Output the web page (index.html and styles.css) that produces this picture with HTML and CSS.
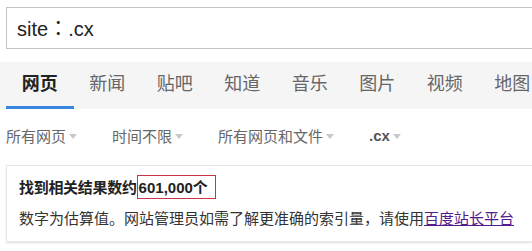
FILE: index.html
```html
<!DOCTYPE html>
<html lang="zh-CN">
<head>
<meta charset="utf-8">
<link rel="stylesheet" href="styles.css">
</head>
<body>
<div class="search">site<span class="colon" lang="zh-TW">：</span>.cx</div>
<nav class="nav">
  <span class="tab active">网页</span>
  <span class="tab">新闻</span>
  <span class="tab">贴吧</span>
  <span class="tab">知道</span>
  <span class="tab">音乐</span>
  <span class="tab">图片</span>
  <span class="tab">视频</span>
  <span class="tab">地图</span>
</nav>
<div class="filters">
  <span class="filter">所有网页<i class="caret"></i></span>
  <span class="filter">时间不限<i class="caret"></i></span>
  <span class="filter">所有网页和文件<i class="caret"></i></span>
  <span class="filter site">.cx<i class="caret"></i></span>
</div>
<div class="card">
  <div class="count">找到相关结果数约<span class="num">601,000个</span></div>
  <div class="note">数字为估算值。网站管理员如需了解更准确的索引量，请使用<a class="link" href="#">百度站长平台</a></div>
</div>
</body>
</html>
```
FILE: styles.css
```css
html, body {
  margin: 0;
  padding: 0;
  background: #fff;
  width: 532px;
  height: 251px;
  overflow: hidden;
  font-family: "Liberation Sans", Arial, "Noto Sans CJK SC", sans-serif;
}
.search {
  margin: 7px 0 0 6px;
  height: 40px;
  border: 1px solid #c4c4c4;
  border-right: none;
  padding-left: 10px;
  font-size: 20px;
  line-height: 40px;
  color: #222;
  white-space: nowrap;
}
.colon {
  font-family: "Noto Sans CJK TC", sans-serif;
}
.nav {
  margin-top: 13px;
  height: 47px;
  background: #f5f5f6;
  display: flex;
  padding-left: 6px;
  box-sizing: border-box;
  white-space: nowrap;
}
.tab {
  flex: 0 0 67.5px;
  text-align: center;
  font-size: 18px;
  line-height: 44px;
  color: #666;
  box-sizing: border-box;
  height: 47px;
}
.tab.active {
  color: #222;
  font-weight: bold;
  border-bottom: 3px solid #3a86df;
}
.filters {
  display: flex;
  align-items: center;
  height: 28px;
  margin-top: 12px;
  padding-left: 6px;
  white-space: nowrap;
}
.filter {
  font-size: 15px;
  color: #666;
  margin-right: 35px;
  display: flex;
  align-items: center;
}
.filter.site {
  color: #555;
  font-weight: bold;
}
.caret {
  display: inline-block;
  width: 0;
  height: 0;
  border-left: 4.5px solid transparent;
  border-right: 4.5px solid transparent;
  border-top: 5px solid #c8c8c8;
  margin-left: 3px;
  margin-top: 2px;
}
.card {
  margin: 16px 0 0 6px;
  border: 1px solid #e8e8e8;
  border-right: none;
  box-shadow: 0 1px 2px rgba(0, 0, 0, 0.12);
  padding: 9px 0 12px 12px;
  white-space: nowrap;
}
.count {
  font-size: 15px;
  font-weight: bold;
  color: #222;
  line-height: 24px;
  height: 24px;
  letter-spacing: -0.3px;
}
.num {
  display: inline-block;
  border: 1px solid #c8344a;
  height: 22px;
  line-height: 24px;
  padding: 0 7px 0 1px;
  letter-spacing: 0;
}
.note {
  margin-top: 10px;
  font-size: 15px;
  color: #333;
  line-height: 20px;
}
.link {
  color: #551a8b;
  text-decoration: underline;
}
```
